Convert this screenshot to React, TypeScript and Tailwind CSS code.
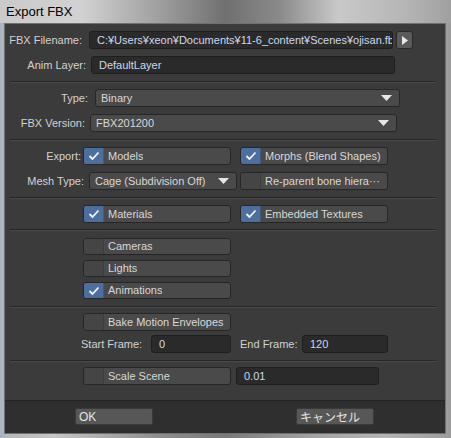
import React from "react";

const font = { fontFamily: '"Liberation Sans", "Noto Sans CJK JP", sans-serif' };

function Check() {
  return (
    <svg width="12" height="10" viewBox="0 0 12 10">
      <path d="M1.5 5 L4.5 8 L10.5 1.5" stroke="#f2f4f8" strokeWidth="1.8" fill="none" />
    </svg>
  );
}

function CheckBtn({ label, checked, className = "" }: { label: string; checked?: boolean; className?: string }) {
  return (
    <div className={"flex h-[18px] w-[148px] shrink-0 overflow-hidden rounded-[3px] border border-[#262626] bg-[#4a4a4a] " + className}>
      <div
        className={
          "flex w-[20px] shrink-0 items-center justify-center border-r " +
          (checked ? "bg-[#4c6f9f] border-[#3d5a82]" : "bg-[#454545] border-[#3c3c3c]")
        }
      >
        {checked ? <Check /> : null}
      </div>
      <div className="flex items-center pl-[4px] text-[11px] text-[#d8d8d8] whitespace-nowrap overflow-hidden">{label}</div>
    </div>
  );
}

function Field({ value, className = "" }: { value: string; className?: string }) {
  return (
    <div
      className={
        "flex h-[18px] shrink-0 items-center overflow-hidden whitespace-nowrap rounded-[3px] border border-[#1e1e1e] bg-[#2a2a2a] pl-[7px] text-[11px] text-[#cdd8ec] " +
        className
      }
    >
      {value}
    </div>
  );
}

function Arrow() {
  return (
    <svg width="11" height="6" viewBox="0 0 11 6">
      <path d="M0 0 L11 0 L5.5 6 Z" fill="#e6e6e6" />
    </svg>
  );
}

function Drop({ value, className = "" }: { value: string; className?: string }) {
  return (
    <div
      className={
        "flex h-[18px] shrink-0 items-center justify-between rounded-[3px] border border-[#272727] bg-[#4a4a4a] pl-[5px] pr-[7px] text-[11px] text-[#d8d8d8] whitespace-nowrap " +
        className
      }
    >
      <span>{value}</span>
      <Arrow />
    </div>
  );
}

function Sep({ className = "" }: { className?: string }) {
  return <div className={"ml-[5px] h-[2px] w-[426px] border-t border-[#262626] border-b border-b-[#4a4a4a] " + className} />;
}

function Label({ text, className = "" }: { text: string; className?: string }) {
  return <div className={"shrink-0 text-right text-[11px] text-[#d2d2d2] whitespace-nowrap " + className}>{text}</div>;
}

export default function App() {
  return (
    <div
      className="flex h-[438px] w-[451px] flex-col overflow-hidden bg-[linear-gradient(90deg,#aab4c4_0%,#b8b8b8_2%,#c6c6c6_12%,#8e8e8e_35%,#7a7a7a_50%,#a4a4a4_70%,#b4b4b4_85%,#9c9c9c_100%)]"
      style={font}
    >
      <div
        className="flex h-[23px] shrink-0 items-center pl-[6px] text-[13px] text-[#000000] bg-[linear-gradient(90deg,#cacaca_0%,#d2d2d2_18%,#a0a0a0_35%,#707070_50%,#8a8a8a_62%,#c9c9c9_75%,#b5b5b5_90%,#a0a0a0_100%)]"
        style={{ color: "#000000" }}
      >
        Export FBX
      </div>
      <div className="ml-[4px] mr-[5px] flex h-[411px] shrink-0 flex-col border border-[#707070] bg-[#3b3b3b]">
        <div className="mt-[7px] flex items-center">
          <Label text="FBX Filename:" className="w-[77px]" />
          <Field value="C:¥Users¥xeon¥Documents¥11-6_content¥Scenes¥ojisan.fbx" className="ml-[7px] w-[304px]" />
          <div className="ml-[3px] flex h-[18px] w-[17px] items-center justify-center rounded-[3px] border border-[#2a2a2a] bg-[#5a5a5a]">
            <svg width="6" height="9" viewBox="0 0 6 9">
              <path d="M0 0 L6 4.5 L0 9 Z" fill="#e8e8e8" />
            </svg>
          </div>
        </div>
        <div className="mt-[7px] flex items-center">
          <Label text="Anim Layer:" className="w-[81px]" />
          <Field value="DefaultLayer" className="ml-[5px] w-[304px]" />
        </div>
        <Sep className="mt-[7px]" />
        <div className="mt-[6px] flex items-center">
          <Label text="Type:" className="w-[83px]" />
          <Drop value="Binary" className="ml-[7px] w-[305px]" />
        </div>
        <div className="mt-[7px] flex items-center">
          <Label text="FBX Version:" className="w-[80px]" />
          <Drop value="FBX201200" className="ml-[5px] w-[307px]" />
        </div>
        <Sep className="mt-[7px]" />
        <div className="mt-[6px] flex items-center">
          <Label text="Export:" className="w-[76px]" />
          <CheckBtn label="Models" checked className="ml-[2px]" />
          <CheckBtn label="Morphs (Blend Shapes)" checked className="ml-[9px]" />
        </div>
        <div className="mt-[7px] flex items-center">
          <Label text="Mesh Type:" className="w-[79px]" />
          <Drop value="Cage (Subdivision Off)" className="ml-[5px] w-[148px]" />
          <CheckBtn label="Re-parent bone hiera···" className="ml-[3px]" />
        </div>
        <Sep className="mt-[7px]" />
        <div className="mt-[6px] flex items-center pl-[78px]">
          <CheckBtn label="Materials" checked />
          <CheckBtn label="Embedded Textures" checked className="ml-[9px]" />
        </div>
        <Sep className="mt-[6px]" />
        <div className="mt-[7px] flex flex-col gap-[5px] pl-[78px]">
          <CheckBtn label="Cameras" className="!h-[17px]" />
          <CheckBtn label="Lights" className="!h-[17px]" />
          <CheckBtn label="Animations" checked className="!h-[17px]" />
        </div>
        <Sep className="mt-[7px]" />
        <div className="mt-[5px] flex items-center pl-[78px]">
          <CheckBtn label="Bake Motion Envelopes" />
        </div>
        <div className="mt-[4px] flex items-center pl-[76px]">
          <div className="w-[70px] shrink-0 text-[11px] text-[#d2d2d2]">Start Frame:</div>
          <Field value="0" className="w-[80px]" />
          <div className="ml-[9px] w-[62px] shrink-0 text-[11px] text-[#d2d2d2]">End Frame:</div>
          <Field value="120" className="w-[86px]" />
        </div>
        <Sep className="mt-[7px]" />
        <div className="mt-[5px] flex items-center pl-[78px]">
          <CheckBtn label="Scale Scene" />
          <Field value="0.01" className="ml-[5px] w-[143px]" />
        </div>
        <div className="mt-auto flex h-[33px] shrink-0 items-start border-t border-[#232323] bg-[#2f2f2f] pl-[70px] pt-[7px]">
          <div className="flex h-[17px] w-[78px] items-center rounded-[2px] border border-[#3a3a3a] bg-[#575757] pl-[3px] text-[12px] text-[#e4e4e4]">
            OK
          </div>
          <div
            className="ml-[143px] flex h-[17px] w-[78px] items-center rounded-[2px] border border-[#3a3a3a] bg-[#575757] pl-[3px] text-[12px] text-[#e4e4e4]"
            style={{ fontFamily: '"Noto Sans CJK JP", sans-serif' }}
          >
            キャンセル
          </div>
        </div>
      </div>
    </div>
  );
}
